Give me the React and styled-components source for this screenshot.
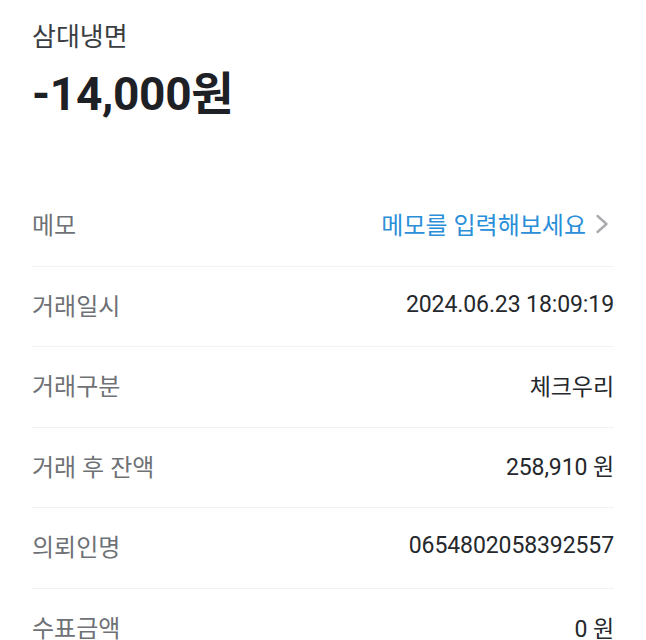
import React from 'react'
import styled, {createGlobalStyle} from 'styled-components'

const GlobalStyle = createGlobalStyle`
  html, body {
    margin: 0;
    padding: 0;
    background: #ffffff;
  }
  body {
    font-family: Roboto, "Noto Sans CJK KR", sans-serif;
    -webkit-font-smoothing: antialiased;
  }
`

const rows = [
  {label: '거래일시', value: '2024.06.23 18:09:19'},
  {label: '거래구분', value: '체크우리'},
  {label: '거래 후 잔액', value: '258,910 원'},
  {label: '의뢰인명', value: '0654802058392557'},
  {label: '수표금액', value: '0 원'},
]

export default function App() {
  return (
    <>
      <GlobalStyle />
      <StyledPage>
        <StyledHeader>
          <StyledMerchant>삼대냉면</StyledMerchant>
          <StyledAmount>-14,000원</StyledAmount>
        </StyledHeader>
        <StyledList>
          <StyledRow>
            <StyledLabel>메모</StyledLabel>
            <StyledMemoLink type="button">
              메모를 입력해보세요
              <svg width="16" height="22" viewBox="0 0 16 22" fill="none">
                <path
                  d="M3.5 3 L12.5 11 L3.5 19"
                  stroke="#a9abae"
                  strokeWidth="2.4"
                  strokeLinecap="round"
                  strokeLinejoin="round"
                />
              </svg>
            </StyledMemoLink>
          </StyledRow>
          {rows.map(r => (
            <StyledRow key={r.label}>
              <StyledLabel>{r.label}</StyledLabel>
              <StyledValue>{r.value}</StyledValue>
            </StyledRow>
          ))}
        </StyledList>
      </StyledPage>
    </>
  )
}

//styled-components

const StyledPage = styled.div`
  box-sizing: border-box;
  width: 100%;
  padding: 20px 32px 0 32px;
`

const StyledHeader = styled.div`
  display: flex;
  flex-direction: column;
  gap: 12px;
`

const StyledMerchant = styled.div`
  font-size: 26px;
  line-height: 34px;
  color: #3a3d41;
`

const StyledAmount = styled.div`
  font-size: 46px;
  line-height: 56px;
  font-weight: 700;
  color: #1d2024;
  letter-spacing: -0.3px;
`

const StyledList = styled.div`
  margin-top: 64px;
  display: flex;
  flex-direction: column;
`

const StyledRow = styled.div`
  box-sizing: border-box;
  height: 80.5px;
  display: flex;
  align-items: center;
  justify-content: space-between;
  padding-bottom: 4px;
  border-bottom: 1px solid #f1f2f3;
  &:last-child {
    border-bottom: 0;
  }
`

const StyledLabel = styled.span`
  font-size: 24px;
  color: #6e7175;
`

const StyledValue = styled.span`
  font-size: 23px;
  color: #25282c;
  letter-spacing: -0.1px;
`

const StyledMemoLink = styled.button`
  display: flex;
  align-items: center;
  gap: 8px;
  background: none;
  border: 0;
  padding: 0;
  margin-right: 4px;
  font-family: inherit;
  font-size: 24px;
  color: #2a8fd8;
  cursor: pointer;
`
